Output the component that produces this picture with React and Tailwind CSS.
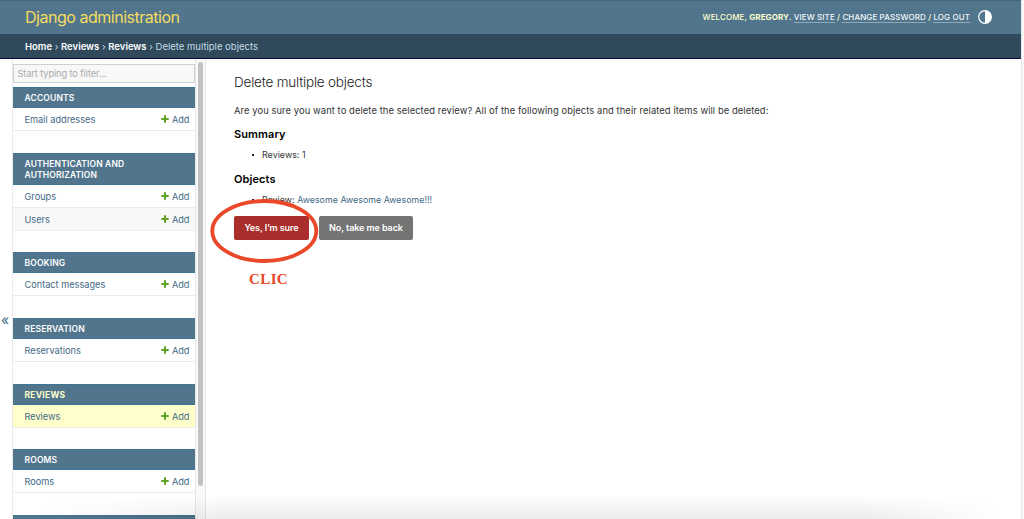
import React from "react";

const modules = [
  { name: "ACCOUNTS", h: "h-[21px]", gap: "mb-[22px]", rows: [{ label: "Email addresses" }] },
  {
    name: "AUTHENTICATION AND AUTHORIZATION",
    h: "h-[32px]",
    gap: "mb-[21px]",
    rows: [{ label: "Groups" }, { label: "Users", alt: true }],
  },
  { name: "BOOKING", h: "h-[21px]", gap: "mb-[22px]", rows: [{ label: "Contact messages" }] },
  { name: "RESERVATION", h: "h-[21px]", gap: "mb-[22px]", rows: [{ label: "Reservations" }] },
  { name: "REVIEWS", h: "h-[21px]", gap: "mb-[21px]", current: true, rows: [{ label: "Reviews", current: true }] },
  { name: "ROOMS", h: "h-[21px]", gap: "mb-[22px]", rows: [{ label: "Rooms" }] },
  { name: "", h: "h-[21px]", gap: "", rows: [] },
];

function Module({ item }) {
  return (
    <section className={`shrink-0 ${item.gap}`}>
      <h2
        className={`flex items-center border-y border-[#417393] bg-[#50758d] pt-px pr-12 pl-[11.5px] text-[8.5px] leading-[10.5px] ${item.h} ${
          item.current ? "font-bold tracking-[0.25px] text-[#ffffcc]" : "font-semibold tracking-[0.15px] text-white"
        }`}
      >
        {item.name}
      </h2>
      {item.rows.map((row) => (
        <div
          key={row.label}
          className={`flex h-[23px] items-center justify-between border-b border-[#ebebeb] pt-[2px] pr-[5.5px] pl-[11.5px] text-[9.2px] text-[#426985] ${
            row.current ? "bg-[#ffffcc]" : row.alt ? "bg-[#f8f8f8]" : "bg-white"
          }`}
        >
          <a>{row.label}</a>
          <a className="flex items-center gap-[2.5px]">
            <svg className="-mt-px" width="8" height="8" viewBox="0 0 8 8" fill="#5fa225">
              <path d="M3 .3h2V3h2.7v2H5v2.7H3V5H.3V3H3z" />
            </svg>
            Add
          </a>
        </div>
      ))}
    </section>
  );
}

function HeaderLink({ children }) {
  return <a className="border-b border-[#8fa8b8] text-[#f2f6f8]">{children}</a>;
}

export default function App() {
  return (
    <div className="relative flex h-[519px] w-[1024px] overflow-hidden bg-[#f8f8f8] font-['Inter',sans-serif] text-[#333]">
      <div className="flex w-[1022px] flex-col border-r border-[#e8e8e8] bg-white">
        <header className="flex h-[34px] shrink-0 items-center justify-between border-t border-[#41677f] bg-[#50758d] pr-[29px] pl-[25px]">
          <h1 className="-mt-px text-[16px] leading-[20px] tracking-[-0.48px] text-[#f5dd5d]">Django administration</h1>
          <div className="flex items-center gap-[8px]">
            <div className="-mt-px text-[8px] leading-[9px] font-medium tracking-[0.1px] whitespace-pre text-[#ffffcc]">
              WELCOME, <strong className="font-bold">GREGORY</strong>. <HeaderLink>VIEW SITE</HeaderLink> /{" "}
              <HeaderLink>CHANGE PASSWORD</HeaderLink> / <HeaderLink>LOG OUT</HeaderLink>
            </div>
            <svg className="-mt-px" width="14" height="14" viewBox="0 0 14 14">
              <circle cx="7" cy="7" r="6.3" fill="none" stroke="#fff" strokeWidth="1.2" />
              <path d="M7 .5a6.5 6.5 0 0 1 0 13z" fill="#fff" />
            </svg>
          </div>
        </header>
        <nav className="flex h-[25px] shrink-0 items-center border-b border-[#050b45] bg-[#304a5b] pl-[25px] text-[9.5px] whitespace-pre text-[#c4dce8]">
          <div className="pt-[3px]">
            <b className="font-semibold text-white">Home</b> › <b className="font-semibold text-white">Reviews</b> ›{" "}
            <b className="font-semibold text-white">Reviews</b> › Delete multiple objects
          </div>
        </nav>
        <div className="flex min-h-0 flex-1">
          <button className="flex w-[12px] shrink-0 items-center justify-center pt-[62px] pr-[2px] text-[14px] leading-none text-[#426985]">
            «
          </button>
          <aside className="flex w-[183px] shrink-0 flex-col overflow-hidden border-l border-[#eaeaea] pt-[5px]">
            <div className="mb-[4px] flex h-[19px] shrink-0 items-center border border-[#d0d0d0] bg-[#f8f8f8] pl-[3.4px] text-[9.2px] tracking-[-0.08px] text-[#aaa]">
              Start typing to filter...
            </div>
            {modules.map((item, i) => (
              <Module key={i} item={item} />
            ))}
          </aside>
          <div className="flex w-[11px] shrink-0 justify-center border-r border-l border-[#e6e6e6] bg-[#fafafa] pt-[3px]">
            <div className="h-[424px] w-[5px] rounded-full bg-[#c1c1c1]" />
          </div>
          <main className="flex flex-1 flex-col items-start pl-[28px]">
            <h1 className="mt-[14px] text-[13.5px] leading-[18px] font-light tracking-[-0.2px] text-[#222]">
              Delete multiple objects
            </h1>
            <p className="mt-[13px] text-[9.4px] leading-[14px] tracking-[0.08px]">
              Are you sure you want to delete the selected review? All of the following objects and their related items
              will be deleted:
            </p>
            <h2 className="mt-[8px] text-[11px] leading-[16px] font-semibold tracking-[0.08px] text-black">Summary</h2>
            <div className="mt-[5px] flex h-[15px] items-center pl-[18px] text-[8.8px] tracking-[0.07px]">
              <span className="mr-[8px] size-[2px] bg-[#222]" />
              Reviews: 1
            </div>
            <h2 className="mt-[9px] text-[11px] leading-[16px] font-semibold tracking-[0.08px] text-black">Objects</h2>
            <div className="mt-[5px] flex h-[15px] items-center pl-[18px] text-[8.8px] tracking-[0.05px] whitespace-pre">
              <span className="mr-[8px] size-[2px] bg-[#222]" />
              Review: <a className="text-[#426985]">Awesome Awesome Awesome!!!</a>
            </div>
            <div className="mt-[9px] flex gap-[10px] text-[9px] font-semibold tracking-[-0.08px] text-white">
              <button className="h-[24px] w-[75px] rounded-[2px] bg-[#aa2e2b]">Yes, I’m sure</button>
              <button className="h-[24px] w-[94px] rounded-[2px] bg-[#747474]">No, take me back</button>
            </div>
          </main>
        </div>
      </div>
      <div className="pointer-events-none absolute bottom-0 left-[40px] h-[24px] w-[960px] bg-linear-to-b from-transparent to-black/8 [mask-image:linear-gradient(to_right,transparent,black_20%,black_85%,transparent)]" />
      <svg className="absolute top-[197px] left-[209px]" width="112" height="68" viewBox="0 0 112 68" fill="none">
        <ellipse cx="55.3" cy="34" rx="52" ry="30" stroke="#e94829" strokeWidth="3.8" />
      </svg>
      <div className="absolute top-[271px] left-[249px] font-['Liberation_Serif',serif] text-[15px] leading-[17px] font-bold tracking-[0.4px] text-[#e94829]">
        CLIC
      </div>
    </div>
  );
}
